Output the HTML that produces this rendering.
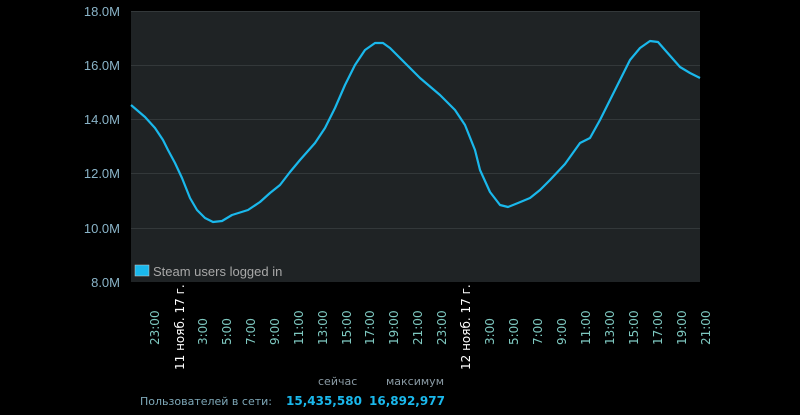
<!DOCTYPE html>
<html><head><meta charset="utf-8"><style>
body{margin:0;background:#000;width:800px;height:415px;overflow:hidden;font-family:"Liberation Sans","DejaVu Sans",sans-serif}
</style></head><body>
<svg width="800" height="415" style="position:absolute;left:0;top:0">
<rect x="131" y="11" width="569" height="271" fill="#1f2325"/>
<g stroke="#33383a" stroke-width="1">
<line x1="131" y1="11.5" x2="700" y2="11.5"/><line x1="131" y1="65.5" x2="700" y2="65.5"/>
<line x1="131" y1="119.5" x2="700" y2="119.5"/><line x1="131" y1="173.5" x2="700" y2="173.5"/>
<line x1="131" y1="228.5" x2="700" y2="228.5"/>
</g>
<g fill="#8ab4c8" font-size="13" text-anchor="end">
<text x="120" y="16">18.0M</text><text x="120" y="70">16.0M</text><text x="120" y="124">14.0M</text>
<text x="120" y="178">12.0M</text><text x="120" y="233">10.0M</text><text x="120" y="287">8.0M</text>
</g>
<path fill="none" stroke="#1ab8ec" stroke-width="2.2" stroke-linejoin="round" d="M131,105 L145,117 L155,128 L163,140 L168,150 L175,163 L182,178 L190,198 L197,210 L205,218 L213,222 L222,221 L232,215 L248,210 L260,202 L270,193 L280,185 L290,172 L300,160 L315,143 L325,128 L335,108 L345,85 L355,65 L365,50 L375,43 L383,43 L390,48 L400,58 L410,68 L420,78 L440,95 L455,110 L465,125 L475,150 L480,170 L490,192 L500,205 L508,207 L518,203 L530,198 L540,190 L550,180 L565,164 L580,143 L590,138 L600,120 L610,100 L620,80 L630,60 L640,48 L650,41 L658,42 L665,50 L680,67 L690,73 L700,78"/>
<rect x="135" y="265" width="14" height="11" fill="#1ab8ec" stroke="#ccc" stroke-width="0.5"/>
<text x="153" y="276" fill="#a8a8a8" font-size="13">Steam users logged in</text>
<g font-size="12" font-family="DejaVu Sans, sans-serif">
<g fill="#7ec8c0">
<text transform="translate(159,345) rotate(-90)">23:00</text>
<text transform="translate(207,345) rotate(-90)">3:00</text>
<text transform="translate(231,345) rotate(-90)">5:00</text>
<text transform="translate(255,345) rotate(-90)">7:00</text>
<text transform="translate(279,345) rotate(-90)">9:00</text>
<text transform="translate(303,345) rotate(-90)">11:00</text>
<text transform="translate(327,345) rotate(-90)">13:00</text>
<text transform="translate(351,345) rotate(-90)">15:00</text>
<text transform="translate(374,345) rotate(-90)">17:00</text>
<text transform="translate(398,345) rotate(-90)">19:00</text>
<text transform="translate(422,345) rotate(-90)">21:00</text>
<text transform="translate(446,345) rotate(-90)">23:00</text>
<text transform="translate(494,345) rotate(-90)">3:00</text>
<text transform="translate(518,345) rotate(-90)">5:00</text>
<text transform="translate(542,345) rotate(-90)">7:00</text>
<text transform="translate(566,345) rotate(-90)">9:00</text>
<text transform="translate(590,345) rotate(-90)">11:00</text>
<text transform="translate(614,345) rotate(-90)">13:00</text>
<text transform="translate(638,345) rotate(-90)">15:00</text>
<text transform="translate(662,345) rotate(-90)">17:00</text>
<text transform="translate(686,345) rotate(-90)">19:00</text>
<text transform="translate(710,345) rotate(-90)">21:00</text>
</g>
<g fill="#fff">
<text transform="translate(184,370) rotate(-90)">11 нояб. 17 г.</text>
<text transform="translate(470,370) rotate(-90)">12 нояб. 17 г.</text>
</g>
</g>
<g font-family="DejaVu Sans, sans-serif">
<text x="318" y="385" fill="#8a9aa4" font-size="11">сейчас</text>
<text x="386" y="385" fill="#8a9aa4" font-size="11">максимум</text>
<text x="140" y="405" fill="#7ea8b8" font-size="11">Пользователей в сети:</text>
<text x="286" y="405" fill="#1ab8ec" font-size="12" font-weight="bold">15,435,580</text>
<text x="369" y="405" fill="#1ab8ec" font-size="12" font-weight="bold">16,892,977</text>
</g>
</svg>
</body></html>
